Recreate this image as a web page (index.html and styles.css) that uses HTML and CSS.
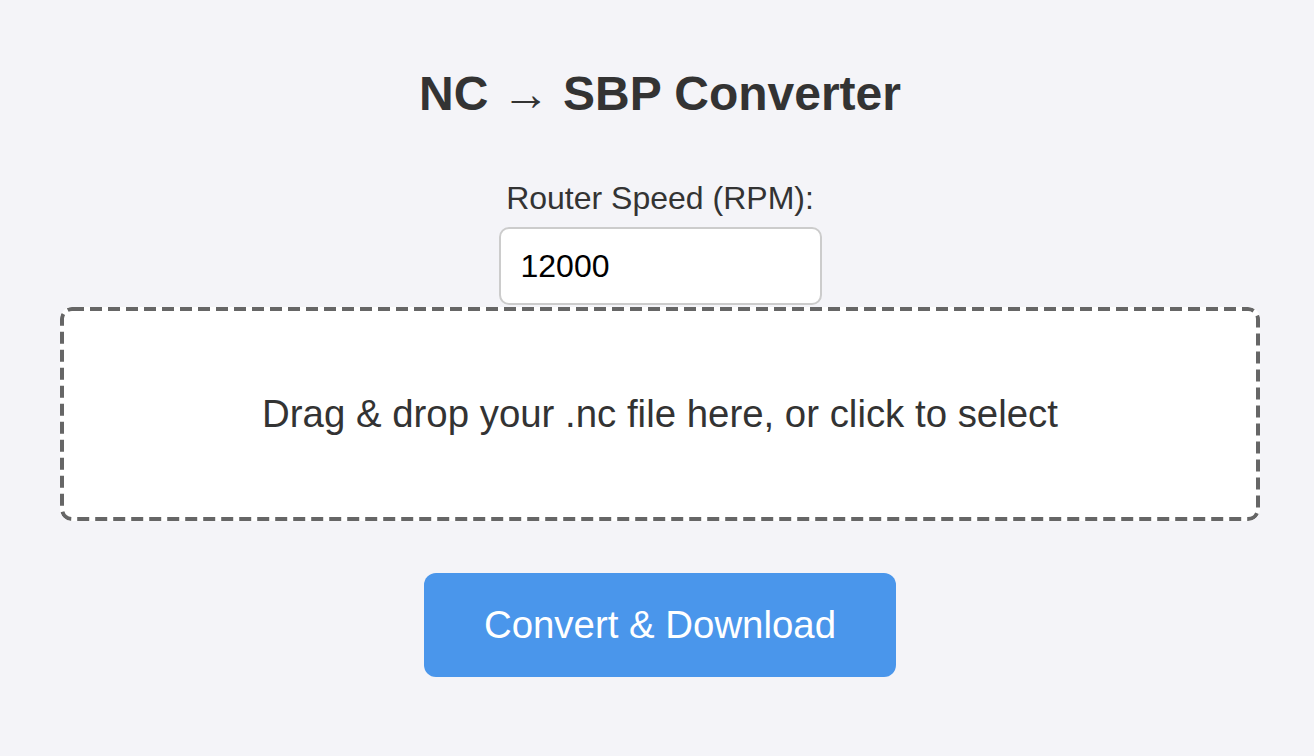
FILE: index.html
```html
<!DOCTYPE html>
<html lang="en">
<head>
<meta charset="utf-8">
<title>NC → SBP Converter</title>
<link rel="stylesheet" href="styles.css">
</head>
<body>
<main class="app">
  <h1 class="title">NC → SBP Converter</h1>
  <label class="field-label" for="rpm">Router Speed (RPM):</label>
  <input class="rpm-input" id="rpm" type="text" value="12000">
  <div class="dropzone">Drag &amp; drop your .nc file here, or click to select</div>
  <button class="convert-btn" type="button">Convert &amp; Download</button>
</main>
</body>
</html>
```
FILE: styles.css
```css
html, body {
  margin: 0;
  padding: 0;
  background: #f4f4f8;
}

body {
  font-family: "Liberation Sans", Arial, Helvetica, sans-serif;
  color: #333333;
}

.app {
  display: flex;
  flex-direction: column;
  align-items: center;
  padding: 66px 0 0 6px;
}

.title {
  margin: 0;
  font-size: 48px;
  line-height: 55px;
  font-weight: bold;
  color: #333333;
}

.field-label {
  display: block;
  margin-top: 59px;
  font-size: 32px;
  line-height: 37px;
  color: #333333;
}

.rpm-input {
  box-sizing: border-box;
  margin-top: 10px;
  width: 323px;
  height: 78px;
  padding: 0 20px;
  border: 2px solid #cccccc;
  border-radius: 10px;
  background: #ffffff;
  font-family: "Liberation Sans", Arial, sans-serif;
  font-size: 32px;
  color: #000000;
  outline: none;
}

.dropzone {
  box-sizing: border-box;
  margin-top: 2px;
  width: 1200px;
  height: 214px;
  display: flex;
  align-items: center;
  justify-content: center;
  padding: 4px;
  border-radius: 12px;
  background-color: #ffffff;
  background-image: url("data:image/svg+xml,%3Csvg xmlns='http://www.w3.org/2000/svg' width='1200' height='214'%3E%3Crect x='2' y='2' width='1196' height='210' rx='10' ry='10' fill='none' stroke='%23666666' stroke-width='4' stroke-dasharray='12 6'/%3E%3C/svg%3E");
  background-repeat: no-repeat;
  background-size: 1200px 214px;
  font-size: 38.4px;
  color: #333333;
}

.convert-btn {
  box-sizing: border-box;
  margin-top: 52px;
  width: 472px;
  height: 104px;
  border: none;
  border-radius: 12px;
  background: #4a96eb;
  color: #ffffff;
  font-family: "Liberation Sans", Arial, sans-serif;
  font-size: 38.4px;
  cursor: pointer;
}
```
